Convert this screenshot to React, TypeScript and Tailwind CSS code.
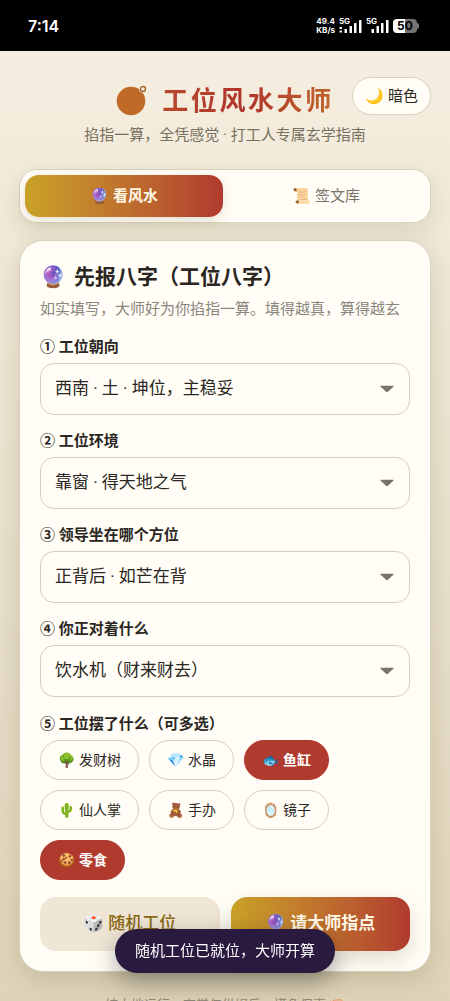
import React, { useState } from 'react';

interface Field {
  id: string;
  label: string;
  options: string[];
}

const FIELDS: Field[] = [
  {
    id: 'facing',
    label: '① 工位朝向',
    options: ['西南 · 土 · 坤位，主稳妥'],
  },
  {
    id: 'surroundings',
    label: '② 工位环境',
    options: ['靠窗 · 得天地之气'],
  },
  {
    id: 'boss',
    label: '③ 领导坐在哪个方位',
    options: ['正背后 · 如芒在背'],
  },
  {
    id: 'opposite',
    label: '④ 你正对着什么',
    options: ['饮水机（财来财去）'],
  },
];

const ITEMS = [
  { icon: '🌳', name: '发财树' },
  { icon: '💎', name: '水晶' },
  { icon: '🐟', name: '鱼缸' },
  { icon: '🌵', name: '仙人掌' },
  { icon: '🧸', name: '手办' },
  { icon: '🪞', name: '镜子' },
  { icon: '🍪', name: '零食' },
];

function Signal({ dual = false }: { dual?: boolean }) {
  return (
    <svg viewBox="0 0 23 14" className="h-[14px] w-[23px]" fill="white" aria-hidden="true">
      {dual && (
        <>
          <rect x="0.5" y="8" width="2.5" height="2" rx="0.5" />
          <rect x="0.5" y="11.5" width="2.5" height="2" rx="0.5" />
        </>
      )}
      <rect x="5.5" y="10" width="2.5" height="4" rx="0.5" />
      <rect x="10.5" y="7" width="2.5" height="7" rx="0.5" />
      <rect x="15" y="4" width="2.5" height="10" rx="0.5" />
      <rect x="20" y="1" width="2.5" height="13" rx="0.5" />
    </svg>
  );
}

function StatusBar() {
  return (
    <div className="flex h-[51px] shrink-0 items-center justify-between bg-black pr-[31px] pl-7 font-['Inter',sans-serif] text-white">
      <span className="text-base font-semibold">7:14</span>
      <div className="flex items-center">
        <div className="text-[8px] leading-[9px] font-bold">
          <div>49.4</div>
          <div>KB/s</div>
        </div>
        <div className="relative ml-1">
          <span className="absolute -top-0.5 left-0 text-[8px] leading-[9px] font-bold">5G</span>
          <Signal dual />
        </div>
        <div className="relative ml-1">
          <span className="absolute -top-0.5 left-0 text-[8px] leading-[9px] font-bold">5G</span>
          <Signal />
        </div>
        <div className="ml-1 flex items-center">
          <div className="flex h-[14px] w-6 items-center justify-center rounded bg-linear-to-r from-white from-50% to-neutral-500 to-50% text-[12px] leading-none font-bold text-black">
            50
          </div>
          <div className="h-1.5 w-0.5 rounded-r bg-neutral-500" />
        </div>
      </div>
    </div>
  );
}

function Logo() {
  return (
    <svg viewBox="0 0 32 32" className="size-8" aria-hidden="true">
      <circle cx="15" cy="16" r="14.3" fill="#c06a28" />
      <circle cx="27" cy="4" r="3.8" fill="#f4eddf" />
      <circle cx="27" cy="4" r="2.5" fill="none" stroke="#a8682c" strokeWidth="1.4" />
    </svg>
  );
}

function SelectField({ id, label, options }: Field) {
  return (
    <div className="mt-4">
      <label htmlFor={id} className="block text-[15px] leading-5 font-bold">
        {label}
      </label>
      <div className="relative mt-[6px]">
        <select
          id={id}
          className="h-[52px] w-full appearance-none rounded-[14px] border border-[#d6cec1] bg-[#fffdf6] px-[14px] text-[17px]"
        >
          {options.map((option) => (
            <option key={option}>{option}</option>
          ))}
        </select>
        <svg
          viewBox="0 0 14 8"
          className="pointer-events-none absolute top-[22px] right-4 h-2 w-[14px]"
          fill="#77736c"
          aria-hidden="true"
        >
          <path d="M1 0.8h12a.5.5 0 0 1 .4.9L7.6 7.1a.9.9 0 0 1-1.2 0L.6 1.7a.5.5 0 0 1 .4-.9z" />
        </svg>
      </div>
    </div>
  );
}

export default function App() {
  const [tab, setTab] = useState<'look' | 'lots'>('look');
  const [picked, setPicked] = useState<string[]>(['鱼缸', '零食']);

  const toggle = (name: string) => {
    setPicked((prev) => (prev.includes(name) ? prev.filter((n) => n !== name) : [...prev, name]));
  };

  const tabClass = (active: boolean) =>
    active
      ? 'flex h-[42px] flex-1 items-center justify-center gap-1 rounded-[14px] bg-linear-to-r from-[#c9a227] to-[#b03a2e] text-[15px] font-bold text-[#fff8e7] shadow-[0_4px_12px_rgba(90,60,20,0.15)]'
      : 'flex h-[42px] flex-1 items-center justify-center gap-1 rounded-[14px] text-[15px] text-[#77716a]';

  return (
    <div className="flex h-screen flex-col overflow-hidden font-['Roboto','Noto_Sans_CJK_SC',sans-serif] text-[#2b2622]">
      <StatusBar />
      <main className="flex-1 overflow-y-auto bg-linear-to-b from-[#f5eee0] to-[#ded4ba] px-[19px] pt-[26px] pb-10 [scrollbar-width:none]">
        <header className="relative text-center">
          <button
            type="button"
            className="absolute top-0 right-0 flex h-[38px] items-center gap-1 rounded-full border border-[#d8d2bd] bg-[#fffdf6] px-3 text-[15px]"
          >
            <span>🌙</span>
            <span>暗色</span>
          </button>
          <div className="flex h-12 items-center justify-center gap-[14px]">
            <Logo />
            <h1 className="bg-linear-to-r from-[#b8472c] via-[#b0352c] to-[#c0662c] bg-clip-text text-[26px] leading-10 font-bold tracking-widest text-transparent">
              工位风水大师
            </h1>
          </div>
          <p className="text-[15px] leading-5 text-[#77705f]">掐指一算，全凭感觉 · 打工人专属玄学指南</p>
        </header>

        <nav className="mt-6 flex gap-1 rounded-[18px] border border-[#d8d2bd] bg-[#fffdf6] p-[5px] shadow-[0_8px_24px_rgba(90,75,30,0.14)]">
          <button type="button" className={tabClass(tab === 'look')} onClick={() => setTab('look')}>
            <span>🔮</span>
            <span>看风水</span>
          </button>
          <button type="button" className={tabClass(tab === 'lots')} onClick={() => setTab('lots')}>
            <span>📜</span>
            <span>签文库</span>
          </button>
        </nav>

        <section className="mt-[17px] rounded-3xl border border-[#d8d2bd] bg-[#fffdf6] p-5 shadow-[0_8px_24px_rgba(90,75,30,0.18)]">
          <h2 className="flex items-center gap-2 text-[21px] leading-8 font-bold">
            <span>🔮</span>
            <span>先报八字（工位八字）</span>
          </h2>
          <p className="mt-1 text-[15px] leading-6 text-[#8a857d]">
            如实填写，大师好为你掐指一算。填得越真，算得越玄
          </p>

          {FIELDS.map((field) => (
            <SelectField key={field.id} {...field} />
          ))}

          <fieldset className="mt-[17px]">
            <legend className="text-[15px] leading-5 font-bold">⑤ 工位摆了什么（可多选）</legend>
            <div className="mt-[6px] flex flex-wrap gap-2.5">
              {ITEMS.map(({ icon, name }) => (
                <button
                  key={name}
                  type="button"
                  aria-pressed={picked.includes(name)}
                  onClick={() => toggle(name)}
                  className={
                    picked.includes(name)
                      ? 'flex h-10 items-center gap-1 rounded-full border border-[#b03a2e] bg-[#b03a2e] px-[17px] text-sm font-bold text-white'
                      : 'flex h-10 items-center gap-1 rounded-full border border-[#d6cec1] px-[17px] text-sm'
                  }
                >
                  <span>{icon}</span>
                  <span>{name}</span>
                </button>
              ))}
            </div>
          </fieldset>

          <div className="mt-[17px] flex gap-[11px]">
            <button
              type="button"
              className="flex h-[54px] flex-1 items-center justify-center gap-1 rounded-2xl bg-[#f0e6d6] text-[17px] font-medium text-[#8a6914]"
            >
              <span>🎲</span>
              <span>随机工位</span>
            </button>
            <button
              type="button"
              className="flex h-[54px] flex-1 items-center justify-center gap-1 rounded-2xl bg-linear-to-r from-[#c9a227] to-[#b03a2e] text-[17px] font-bold text-[#fff8e7] shadow-[0_8px_20px_rgba(90,75,30,0.18)]"
            >
              <span>🔮</span>
              <span>请大师指点</span>
            </button>
          </div>
        </section>

        <footer className="mt-[21px] text-center text-[13px] leading-6 text-[#8f8873]">
          纯本地运行，玄学仅供娱乐，摸鱼保真 🦐
        </footer>
      </main>

      <div
        role="status"
        className="fixed bottom-7 left-1/2 flex h-11 -translate-x-1/2 items-center rounded-full bg-[#2a1a40] px-5 text-[15px] whitespace-nowrap text-white shadow-[0_8px_24px_rgba(0,0,0,0.35)]"
      >
        随机工位已就位，大师开算
      </div>
    </div>
  );
}
